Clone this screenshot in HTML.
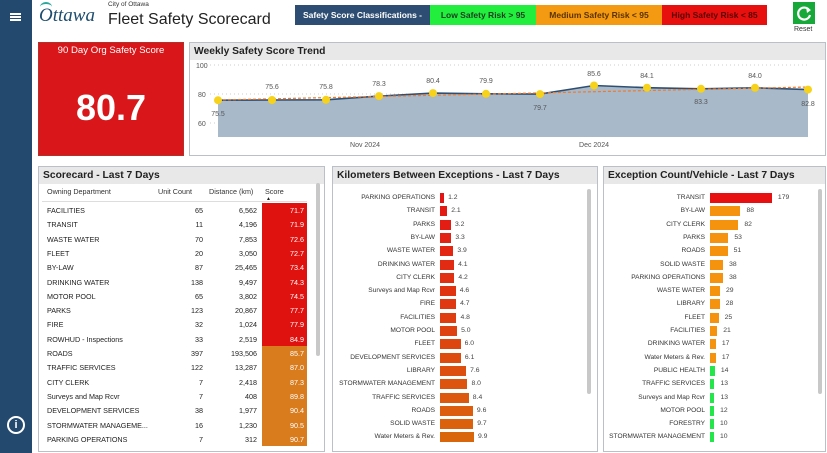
<!DOCTYPE html>
<html><head><meta charset="utf-8"><style>
*{margin:0;padding:0;box-sizing:border-box}
body{width:827px;height:453px;overflow:hidden;background:#fff;font-family:"Liberation Sans",sans-serif;position:relative;color:#222}
.a{position:absolute}
.panel{position:absolute;border:1px solid #b9c0c8;background:#fff}
.ph{background:#e8e8e8;height:17px;font-weight:bold;font-size:10.3px;padding:3px 4px;color:#222;white-space:nowrap}
.row{position:absolute;font-size:7.2px;white-space:nowrap}
.lbl{position:absolute;text-align:right;font-size:6.6px;color:#333;white-space:nowrap}
.bar{position:absolute;height:10px}
.val{position:absolute;font-size:6.8px;color:#444}
</style></head><body>
<div class="a" style="left:0;top:0;width:32px;height:453px;background:#24496f"></div>
<div class="a" style="left:10px;top:13px;width:11px;height:2px;background:#fff;box-shadow:0 3px 0 #fff,0 6px 0 #fff"></div>
<div class="a" style="left:7px;top:416px;width:18px;height:18px;border:2px solid #fff;border-radius:50%;color:#fff;font-size:11px;font-weight:bold;text-align:center;line-height:14px">i</div>

<div class="a" style="left:39px;top:5px;font-family:'Liberation Serif',serif;font-style:italic;font-size:19px;color:#1c4c6e">Ottawa</div>
<div class="a" style="left:40px;top:2px;width:12px;height:10px;border-top:2px solid #2aa79b;border-radius:50%"></div>
<div class="a" style="left:108px;top:1px;font-size:6.5px;color:#333">City of Ottawa</div>
<div class="a" style="left:108px;top:11px;font-size:16px;color:#222">Fleet Safety Scorecard</div>

<div class="a" style="left:295px;top:5px;width:135px;height:20px;background:#2d4e72;color:#fff;font-size:8.5px;font-weight:bold;line-height:20px;text-align:center">Safety Score Classifications -</div>
<div class="a" style="left:430px;top:5px;width:106px;height:20px;background:#22ee3e;color:#1a4020;font-size:8.5px;font-weight:bold;line-height:20px;text-align:center">Low Safety Risk &gt; 95</div>
<div class="a" style="left:536px;top:5px;width:126px;height:20px;background:#f49a12;color:#5a3300;font-size:8.5px;font-weight:bold;line-height:20px;text-align:center">Medium Safety Risk &lt; 95</div>
<div class="a" style="left:662px;top:5px;width:105px;height:20px;background:#e8100f;color:#5b0000;font-size:8.5px;font-weight:bold;line-height:20px;text-align:center">High Safety Risk &lt; 85</div>
<div class="a" style="left:793px;top:2px;width:22px;height:22px;background:#17a83a"></div>
<svg class="a" style="left:793px;top:2px" width="22" height="22"><path d="M16 8 A6 6 0 1 0 17 13" fill="none" stroke="#fff" stroke-width="2.2"/><path d="M13 5 L18 8 L14 11Z" fill="#fff"/></svg>
<div class="a" style="left:794px;top:26px;font-size:7px;color:#333">Reset</div>

<div class="a" style="left:38px;top:42px;width:146px;height:114px;background:#d9171a;border:1px solid #b0322a"></div>
<div class="a" style="left:38px;top:45px;width:146px;text-align:center;color:#fff;font-size:9.6px">90 Day Org Safety Score</div>
<div class="a" style="left:38px;top:87px;width:146px;text-align:center;color:#fff;font-size:36px;font-weight:bold">80.7</div>

<div class="panel" style="left:189px;top:42px;width:637px;height:114px">
<div class="ph" style="height:17px">Weekly Safety Score Trend</div>
</div>
<svg class="a" style="left:190px;top:60px" width="636" height="95" font-family="Liberation Sans" font-size="7">
<g stroke="#ccc" stroke-dasharray="1,3"><line x1="20" y1="5" x2="620" y2="5"/><line x1="20" y1="34" x2="620" y2="34"/><line x1="20" y1="63" x2="620" y2="63"/></g>
<text x="6" y="8" fill="#555">100</text><text x="8" y="37" fill="#555">80</text><text x="8" y="66" fill="#555">60</text>
<path d="M28 40.2 L82 40 L136 39.8 L189 36.1 L243 33.1 L296 33.8 L350 34.1 L404 25.5 L457 27.7 L511 28.8 L565 27.8 L618 29.6 L618 77 L28 77Z" fill="#a8b9ca"/>
<polyline points="28,40.2 82,40 136,39.8 189,36.1 243,33.1 296,33.8 350,34.1 404,25.5 457,27.7 511,28.8 565,27.8 618,29.6" fill="none" stroke="#2f4f72" stroke-width="1.6"/>
<polyline points="28,40 618,27" fill="none" stroke="#f07a2a" stroke-width="1.2" stroke-dasharray="3,2"/>
<g fill="#f7d21a"><circle cx="28" cy="40.2" r="4"/><circle cx="82" cy="40" r="4"/><circle cx="136" cy="39.8" r="4"/><circle cx="189" cy="36.1" r="4"/><circle cx="243" cy="33.1" r="4"/><circle cx="296" cy="33.8" r="4"/><circle cx="350" cy="34.1" r="4"/><circle cx="404" cy="25.5" r="4"/><circle cx="457" cy="27.7" r="4"/><circle cx="511" cy="28.8" r="4"/><circle cx="565" cy="27.8" r="4"/><circle cx="618" cy="29.6" r="4"/></g>
<g fill="#555" text-anchor="middle"><text x="28" y="56">75.5</text><text x="82" y="29">75.6</text><text x="136" y="29">75.8</text><text x="189" y="26">78.3</text><text x="243" y="23">80.4</text><text x="296" y="23">79.9</text><text x="350" y="50">79.7</text><text x="404" y="16">85.6</text><text x="457" y="18">84.1</text><text x="511" y="44">83.3</text><text x="565" y="18">84.0</text><text x="618" y="46">82.8</text>
<text x="175" y="87">Nov 2024</text><text x="404" y="87">Dec 2024</text></g>
</svg>

<div class="panel" style="left:38px;top:166px;width:287px;height:286px">
<div class="ph">Scorecard - Last 7 Days</div>
</div>
<div class="a" style="left:316px;top:183px;width:4px;height:173px;background:#c8c8c8;border-radius:2px"></div>
<div class="row" style="left:47px;top:187px;color:#333">Owning Department</div>
<div class="row" style="left:158px;top:187px;color:#333">Unit Count</div>
<div class="row" style="left:209px;top:187px;color:#333">Distance (km)</div>
<div class="row" style="left:265px;top:187px;color:#333">Score</div>
<div class="a" style="left:266px;top:196px;font-size:5px">▲</div>
<div id="sc"></div>

<div class="panel" style="left:332px;top:166px;width:266px;height:286px">
<div class="ph">Kilometers Between Exceptions - Last 7 Days</div>
</div>
<div class="a" style="left:587px;top:189px;width:4px;height:205px;background:#c8c8c8;border-radius:2px"></div>
<div class="panel" style="left:603px;top:166px;width:223px;height:286px">
<div class="ph">Exception Count/Vehicle - Last 7 Days</div>
</div>
<div class="a" style="left:818px;top:189px;width:4px;height:205px;background:#c8c8c8;border-radius:2px"></div>
<div id="km"></div><div id="ex"></div>
<script>
var s=[["FACILITIES",65,"6,562","71.7"],["TRANSIT",11,"4,196","71.9"],["WASTE WATER",70,"7,853","72.6"],["FLEET",20,"3,050","72.7"],["BY-LAW",87,"25,465","73.4"],["DRINKING WATER",138,"9,497","74.3"],["MOTOR POOL",65,"3,802","74.5"],["PARKS",123,"20,867","77.7"],["FIRE",32,"1,024","77.9"],["ROWHUD - Inspections",33,"2,519","84.9"],["ROADS",397,"193,506","85.7"],["TRAFFIC SERVICES",122,"13,287","87.0"],["CITY CLERK",7,"2,418","87.3"],["Surveys and Map Rcvr",7,"408","89.8"],["DEVELOPMENT SERVICES",38,"1,977","90.4"],["STORMWATER MANAGEME...",16,"1,230","90.5"],["PARKING OPERATIONS",7,"312","90.7"]];
var h='<div class="a" style="left:262px;top:203px;width:45px;height:143px;background:#e0120f"></div><div class="a" style="left:262px;top:346px;width:45px;height:100px;background:#d97c1e"></div><div class="a" style="left:42px;top:201px;width:265px;height:1px;background:#ddd"></div>';
s.forEach(function(r,i){var y=206+i*14.3;h+='<div class="row" style="left:47px;top:'+y+'px">'+r[0]+'</div><div class="row" style="left:150px;width:53px;text-align:right;top:'+y+'px">'+r[1]+'</div><div class="row" style="left:205px;width:52px;text-align:right;top:'+y+'px">'+r[2]+'</div><div class="row" style="left:262px;width:42px;text-align:right;color:#fff;top:'+y+'px">'+r[3]+'</div>';});
document.getElementById('sc').innerHTML=h;
var k=[["PARKING OPERATIONS",1.2],["TRANSIT",2.1],["PARKS",3.2],["BY-LAW",3.3],["WASTE WATER",3.9],["DRINKING WATER",4.1],["CITY CLERK",4.2],["Surveys and Map Rcvr",4.6],["FIRE",4.7],["FACILITIES",4.8],["MOTOR POOL",5.0],["FLEET",6.0],["DEVELOPMENT SERVICES",6.1],["LIBRARY",7.6],["STORMWATER MANAGEMENT",8.0],["TRAFFIC SERVICES",8.4],["ROADS",9.6],["SOLID WASTE",9.7],["Water Meters & Rev.",9.9]];
h='';k.forEach(function(r,i){var y=193+i*13.3,w=r[1]*3.43,t=i/18,c='rgb('+Math.round(228-10*t)+','+Math.round(20+82*t)+','+Math.round(20-8*t)+')';
h+='<div class="lbl" style="left:335px;width:100px;top:'+(y+1)+'px">'+r[0]+'</div><div class="bar" style="left:440px;top:'+y+'px;width:'+w+'px;background:'+c+'"></div><div class="val" style="left:'+(444+w)+'px;top:'+(y+1)+'px">'+r[1].toFixed(1)+'</div>';});
document.getElementById('km').innerHTML=h;
var e=[["TRANSIT",179],["BY-LAW",88],["CITY CLERK",82],["PARKS",53],["ROADS",51],["SOLID WASTE",38],["PARKING OPERATIONS",38],["WASTE WATER",29],["LIBRARY",28],["FLEET",25],["FACILITIES",21],["DRINKING WATER",17],["Water Meters & Rev.",17],["PUBLIC HEALTH",14],["TRAFFIC SERVICES",13],["Surveys and Map Rcvr",13],["MOTOR POOL",12],["FORESTRY",10],["STORMWATER MANAGEMENT",10]];
h='';e.forEach(function(r,i){var y=193+i*13.3,w=Math.max(4,r[1]*0.346),c=i==0?'#e80f10':(i<13?'#f5930f':'#22e64a');
h+='<div class="lbl" style="left:600px;width:105px;top:'+(y+1)+'px">'+r[0]+'</div><div class="bar" style="left:710px;top:'+y+'px;width:'+w+'px;background:'+c+'"></div><div class="val" style="left:'+(716+w)+'px;top:'+(y+1)+'px">'+r[1]+'</div>';});
document.getElementById('ex').innerHTML=h;
</script>
</body></html>
